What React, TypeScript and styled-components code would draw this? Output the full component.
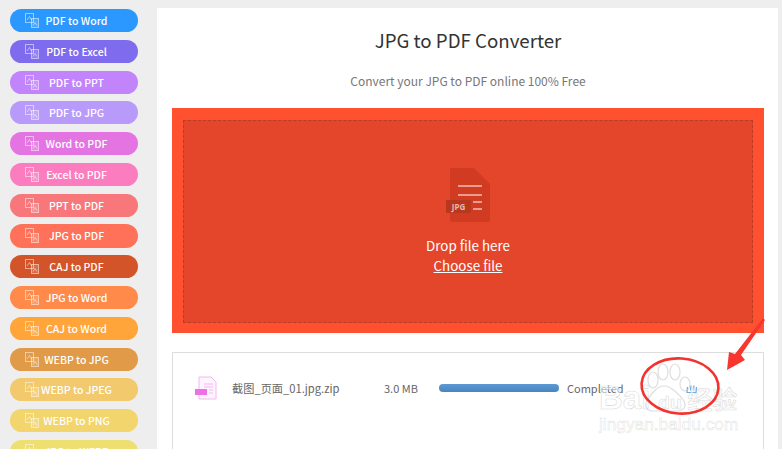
import React from "react";
import styled, { createGlobalStyle } from "styled-components";

const Global = createGlobalStyle`
  html, body { margin: 0; padding: 0; height: 449px; overflow: hidden; background: #eeeeee; }
  body { font-family: "Noto Sans CJK SC", "Noto Sans", sans-serif; }
  * { box-sizing: border-box; }
`;

const Page = styled.div`
  position: relative;
  display: flex;
  align-items: flex-start;
  width: 782px;
  height: 449px;
  overflow: hidden;
`;

const Sidebar = styled.nav`
  display: flex;
  flex-direction: column;
  gap: 7.7px;
  flex: none;
  width: 157px;
  height: 449px;
  padding: 9px 19px 0 10px;
  overflow: hidden;
`;

const Pill = styled.a<{ $bg: string }>`
  position: relative;
  display: block;
  flex: none;
  height: 23.1px;
  border-radius: 12px;
  background: ${(p) => p.$bg};
  color: #fff;
  font-size: 10.500px;
  font-weight: 500;
  line-height: 23px;
  text-align: center;
  white-space: nowrap;
  padding-left: 5px;
`;

const PillIcon = styled.svg`
  position: absolute;
  left: 15px;
  top: 4px;
  width: 14px;
  height: 15px;
  fill: none;
  stroke: rgba(255, 255, 255, 0.5);
  stroke-width: 1;
`;

const Main = styled.main`
  flex: none;
  width: 621px;
  height: 460px;
  margin-top: 8px;
  padding: 0 14px 0 15px;
  background: #fff;
  text-align: center;
`;

const Title = styled.h1`
  margin: 0;
  padding-top: 19px;
  height: 51px;
  font-size: 18.700px;
  font-weight: 400;
  line-height: 26px;
  color: #333;
`;

const Subtitle = styled.p`
  margin: 0;
  height: 49px;
  padding-top: 12px;
  font-size: 12px;
  line-height: 20px;
  color: #777;
`;

const Drop = styled.section`
  height: 225px;
  padding: 12px 11px 10px;
  background: #ff5130;
`;

const DropInner = styled.div`
  display: flex;
  flex-direction: column;
  align-items: center;
  height: 203px;
  padding-top: 47px;
  background: #e4462b;
  border: 1px dashed #b83d24;
  color: #fff;
`;

const DropIcon = styled.svg`
  width: 44px;
  height: 54px;
`;

const DropText = styled.div`
  margin-top: 13px;
  font-size: 13.400px;
  line-height: 20px;
`;

const Choose = styled.a`
  font-size: 13.400px;
  line-height: 20px;
  text-decoration: underline;
`;

const FileCard = styled.section`
  display: flex;
  align-items: center;
  height: 110px;
  margin-top: 19px;
  padding: 0 0 38px 22px;
  border: 1px solid #dddddd;
  text-align: left;
  font-size: 11px;
  color: #666;
`;

const FileIcon = styled.svg`
  flex: none;
  width: 23px;
  height: 24px;
`;

const FileName = styled.span`
  flex: none;
  width: 152px;
  margin-left: 14px;
  font-size: 11.200px;
  white-space: nowrap;
`;

const FileSize = styled.span`
  flex: none;
  width: 55px;
`;

const Track = styled.div`
  flex: none;
  width: 120px;
  height: 8px;
  border-radius: 4px;
  background: linear-gradient(#5c9ad6, #4a86bb);
`;

const Status = styled.span`
  flex: none;
  width: 119px;
  margin-left: 8px;
`;

const DownloadIcon = styled.svg`
  flex: none;
  width: 12px;
  height: 12px;
`;

const Mark = styled.svg`
  position: absolute;
  left: 0;
  top: 0;
  pointer-events: none;
`;

const Watermark = styled.div`
  position: absolute;
  left: 599px;
  top: 381px;
  width: 150px;
  pointer-events: none;
`;

const WaterMain = styled.div`
  display: flex;
  align-items: baseline;
  height: 34px;
  font-family: "Liberation Sans", "Noto Sans CJK SC", sans-serif;
  font-size: 33px;
  font-weight: 700;
  line-height: 34px;
  white-space: nowrap;
  -webkit-text-stroke: 0.6px rgba(180, 180, 180, 0.5);
  color: rgba(255, 255, 255, 0.55);
`;

const WaterDu = styled.span`
  width: 29px;
  margin-left: 8px;
  font-size: 19px;
  text-align: left;
`;

const WaterCn = styled.span`
  font-family: "Noto Sans CJK SC", sans-serif;
  font-size: 25px;
  font-weight: 500;
`;

const WaterUrl = styled.div`
  margin-top: -2px;
  font-family: "Liberation Sans", sans-serif;
  font-size: 17.300px;
  line-height: 22px;
  white-space: nowrap;
  color: rgba(255, 255, 255, 0.6);
  -webkit-text-stroke: 0.4px rgba(180, 180, 180, 0.5);
`;

const items: [string, string][] = [
  ["PDF to Word", "#2a98ff"],
  ["PDF to Excel", "#7f6bee"],
  ["PDF to PPT", "#c184fa"],
  ["PDF to JPG", "#b89afa"],
  ["Word to PDF", "#e574e3"],
  ["Excel to PDF", "#fb7dc0"],
  ["PPT to PDF", "#f7777a"],
  ["JPG to PDF", "#ff7158"],
  ["CAJ to PDF", "#d35429"],
  ["JPG to Word", "#ff8a4a"],
  ["CAJ to Word", "#ffa53a"],
  ["WEBP to JPG", "#e09a48"],
  ["WEBP to JPEG", "#f2c96c"],
  ["WEBP to PNG", "#f2d56c"],
  ["JPG to WEBP", "#efdf70"],
];

const DocsGlyph = () => (
  <PillIcon viewBox="0 0 14 15">
    <rect x="0.500" y="0.500" width="8" height="9" />
    <rect x="6.500" y="5.500" width="7" height="9" fill="rgba(255,255,255,0.15)" />
    <path d="M2 7l2.500-3.500L6.500 7M8 12.500l2-3 2 3" />
  </PillIcon>
);

export default function App() {
  return (
    <Page>
      <Global />
      <Sidebar>
        {items.map(([label, bg]) => (
          <Pill key={label} $bg={bg}>
            <DocsGlyph />
            {label}
          </Pill>
        ))}
      </Sidebar>
      <Main>
        <Title>JPG to PDF Converter</Title>
        <Subtitle>Convert your JPG to PDF online 100% Free</Subtitle>
        <Drop>
          <DropInner>
            <DropIcon viewBox="0 0 44 54">
              <path d="M6 0h22l16 16v36a2 2 0 0 1-2 2H6a2 2 0 0 1-2-2V2a2 2 0 0 1 2-2z" fill="#d03b21" />
              <path d="M12 18h24M12 27h24M27 34h9M27 41h9" stroke="#fff" strokeWidth="1.200" fill="none" />
              <rect x="0" y="32" width="25" height="13" rx="1" fill="#b8371f" />
              <text x="12.500" y="42" textAnchor="middle" fontSize="8" fontWeight="700" fill="#eab9ab" fontFamily="Noto Sans, sans-serif">JPG</text>
            </DropIcon>
            <DropText>Drop file here</DropText>
            <Choose>Choose file</Choose>
          </DropInner>
        </Drop>
        <FileCard>
          <FileIcon viewBox="0 0 23 24">
            <path d="M4 1h12l5 5v17H4z" fill="#fdf4fd" stroke="#f5b8f2" strokeWidth="1" />
            <path d="M9 8h9M9 11h9M14 14h4M14 17h4" stroke="#f5b8f2" strokeWidth="1" />
            <rect x="0" y="13" width="12" height="6" fill="#ee70e6" />
          </FileIcon>
          <FileName>截图_页面_01.jpg.zip</FileName>
          <FileSize>3.0 MB</FileSize>
          <Track />
          <Status>Completed</Status>
          <DownloadIcon viewBox="0 0 12 12">
            <path d="M1.500 5l-.5 5.500h9l.5-5.500M5 3.500l-.5 5M8 3.500l-.5 5" fill="none" stroke="#6ea8e6" strokeWidth="1.200" />
          </DownloadIcon>
        </FileCard>
      </Main>
      <Watermark>
        <WaterMain>
          Bai
          <WaterDu>du</WaterDu>
          <WaterCn>经验</WaterCn>
        </WaterMain>
        <WaterUrl>jingyan.baidu.com</WaterUrl>
      </Watermark>
      <Mark width="782" height="449" viewBox="0 0 782 449">
        <g fill="none" stroke="rgba(195,195,195,0.55)" strokeWidth="1.200">
          <ellipse cx="653" cy="380" rx="5" ry="8" />
          <ellipse cx="663" cy="372" rx="5" ry="8" />
          <ellipse cx="675" cy="372" rx="5" ry="8" />
          <ellipse cx="685" cy="384" rx="5" ry="7" />
          <path d="M664 386c7 0 16 9 20 15 3 6-1 10-7 10h-24c-6 0-9-5-6-10 3-6 10-15 17-15z" />
        </g>
        <ellipse cx="680" cy="386" rx="38.500" ry="27.500" transform="rotate(4 680 386)" fill="none" stroke="#f2332f" strokeWidth="2.600" />
        <path d="M763 318L735 354 729 352 727 370 745 360 741 355 765 320z" fill="#f8362f" />
      </Mark>
    </Page>
  );
}
